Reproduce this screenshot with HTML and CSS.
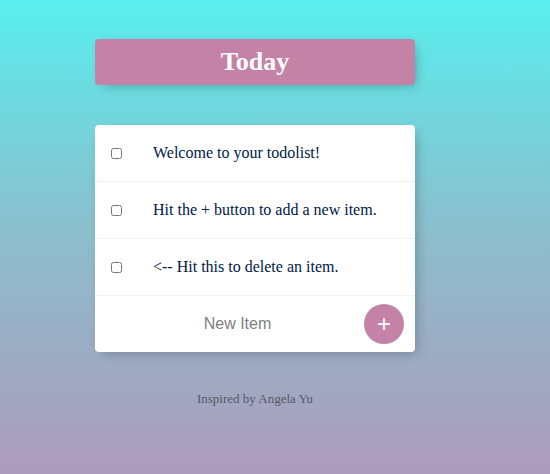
FILE: index.html
```html
<!DOCTYPE html>
<html>
<head>
<meta charset="utf-8">
<link rel="stylesheet" href="styles.css">
</head>
<body>
<div class="page">
  <div class="box heading"><h1>Today</h1></div>
  <div class="box list">
    <div class="item"><input type="checkbox"><p>Welcome to your todolist!</p></div>
    <div class="item"><input type="checkbox"><p>Hit the + button to add a new item.</p></div>
    <div class="item"><input type="checkbox"><p>&lt;-- Hit this to delete an item.</p></div>
    <form class="item new-item">
      <input type="text" placeholder="New Item">
      <button type="button">+</button>
    </form>
  </div>
  <footer>Inspired by Angela Yu</footer>
</div>
</body>
</html>
```
FILE: styles.css
```css
html, body { margin: 0; padding: 0; }
body {
  min-height: 474px;
  background: linear-gradient(180deg, #58eeed 0%, #8dbdcc 50%, #ad9bbb 100%);
  font-family: "Liberation Serif", serif;
}
.page {
  width: 510px;
  padding-top: 39px;
}
.box {
  width: 320px;
  margin: 0 auto;
  background: #fff;
  border-radius: 4px;
  box-shadow: 4px 4px 12px -4px rgba(0,0,0,0.3);
}
.heading {
  background: #c382a6;
  text-align: center;
  height: 46px;
  display: flex;
  align-items: center;
  justify-content: center;
}
.heading h1 {
  margin: 0;
  color: #fff;
  font-size: 26px;
  font-weight: bold;
  line-height: 30px;
}
.list { margin-top: 40px; }
.item {
  min-height: 56px;
  display: flex;
  align-items: center;
  border-bottom: 1px solid #f1f1f1;
}
.item:last-child { border-bottom: 0; min-height: 56px; }
.item input[type="checkbox"] {
  width: 11px;
  height: 11px;
  margin: 0 0 0 16px;
}
.item p {
  margin: 0 0 0 31px;
  font-size: 16px;
  color: #00204a;
}
.new-item { margin: 0; }
.new-item input[type="text"] {
  flex: 1;
  margin-left: 16px;
  height: 40px;
  border: none;
  outline: none;
  text-align: center;
  font-family: "Liberation Sans", Arial, sans-serif;
  font-size: 16px;
  padding: 0;
  background: transparent;
}
.new-item input::placeholder { color: #808080; opacity: 1; }
.new-item button {
  width: 40px;
  height: 40px;
  border-radius: 50%;
  border: 0;
  background: #c382a6;
  color: #fff;
  font-family: "Liberation Sans", Arial, sans-serif;
  font-size: 24px;
  line-height: 40px;
  padding: 0 0 3px 0;
  margin: 0 11px 0 0;
}
footer {
  margin-top: 39px;
  text-align: center;
  font-size: 13px;
  color: rgba(0,0,0,0.5);
}
```
